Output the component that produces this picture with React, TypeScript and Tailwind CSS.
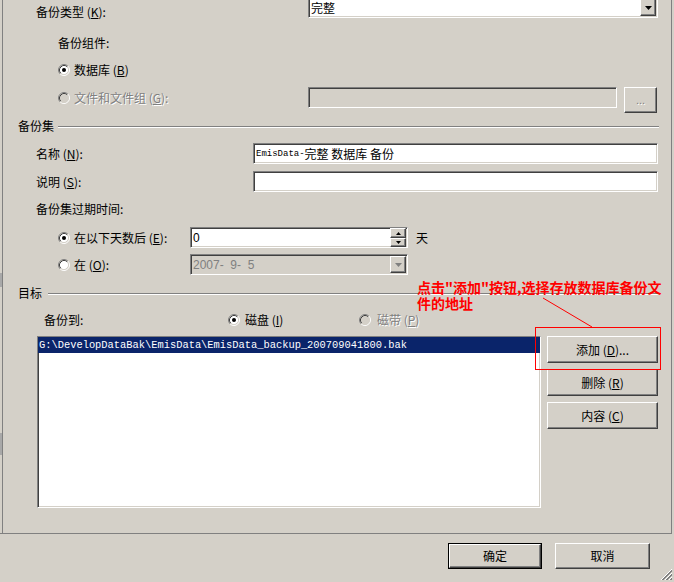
import React from "react";

const SUNKEN =
  "border border-t-[#808080] border-l-[#808080] border-b-white border-r-white shadow-[inset_1px_1px_0_#404040,inset_-1px_-1px_0_#d4d0c8]";
const RAISED =
  "border border-t-white border-l-white border-b-[#404040] border-r-[#404040] shadow-[inset_-1px_-1px_0_#808080] bg-[#d4d0c8]";

function Acc({ c }: { c: string }) {
  return <span className="underline underline-offset-[1px]">{c}</span>;
}

function Radio({ checked, disabled }: { checked?: boolean; disabled?: boolean }) {
  return (
    <svg width="12" height="12" viewBox="0 0 12 12" className="shrink-0">
      <circle cx="6" cy="6" r="4.5" fill={disabled ? "#d4d0c8" : "#ffffff"} />
      <path d="M2.11 9.89 A5.5 5.5 0 0 1 9.89 2.11" stroke="#808080" strokeWidth="1" fill="none" />
      <path d="M9.89 2.11 A5.5 5.5 0 0 1 2.11 9.89" stroke="#ffffff" strokeWidth="1" fill="none" />
      <path d="M2.82 9.18 A4.5 4.5 0 0 1 9.18 2.82" stroke="#404040" strokeWidth="1" fill="none" />
      <path d="M9.18 2.82 A4.5 4.5 0 0 1 2.82 9.18" stroke="#d4d0c8" strokeWidth="1" fill="none" />
      {checked && <circle cx="6" cy="6" r="2" fill="#000000" />}
    </svg>
  );
}

function ArrowBtn({ disabled, h = 17 }: { disabled?: boolean; h?: number }) {
  return (
    <div className={`${RAISED} w-[16px] flex items-center justify-center shrink-0`} style={{ height: h }}>
      <svg width="7" height="4" viewBox="0 0 7 4">
        <path d="M0 0 H7 L3.5 4 Z" fill={disabled ? "#808080" : "#000000"} />
      </svg>
    </div>
  );
}

function SpinBtn({ up, h }: { up?: boolean; h: number }) {
  return (
    <div className={`${RAISED} w-[16px] flex items-center justify-center`} style={{ height: h }}>
      <svg width="5" height="3" viewBox="0 0 5 3">
        {up ? <path d="M0 3 H5 L2.5 0 Z" fill="#000" /> : <path d="M0 0 H5 L2.5 3 Z" fill="#000" />}
      </svg>
    </div>
  );
}

function Header({ text, gap }: { text: string; gap: string }) {
  return (
    <div className={`h-[12px] flex items-start pl-[15px] pr-[12px] ${gap}`}>
      <span className="leading-[12px] whitespace-nowrap">{text}</span>
      <div className="flex-1 mt-[6px] h-[2px] border-t border-t-[#808080] border-b border-b-white" />
    </div>
  );
}

function Button({ children, className = "" }: { children: React.ReactNode; className?: string }) {
  return (
    <div className={`${RAISED} flex items-center justify-center ${className}`}>{children}</div>
  );
}

export default function App() {
  return (
    <div className="relative w-[674px] h-[582px] overflow-hidden bg-[#d4d0c8] text-black text-[12px] leading-[12px] font-['Noto_Sans_CJK_SC','Noto_Sans',sans-serif]">
      <div className="flex h-[534px]">
        <div className="w-[2px] h-[534px] border-b border-[#808080] flex flex-col shrink-0">
          <div className="h-[273px]" />
          <div className="h-[14px] bg-[#a8a8a8]" />
          <div className="h-[146px]" />
          <div className="h-[22px] bg-[#a8a8a8]" />
        </div>
        <div className="w-[670px] h-[534px] border-l border-r border-b border-[#808080] flex flex-col shrink-0">
          {/* backup type */}
          <div className="flex h-[18px] shrink-0">
            <div className="w-[305px] pl-[33px] pt-[6px] whitespace-nowrap">
              备份类型 (<Acc c="K" />):
            </div>
            <div className={`${SUNKEN} bg-white w-[350px] h-[21px] -mt-[3px] flex items-center justify-between pl-[2px] pr-[1px]`}>
              <span>完整</span>
              <ArrowBtn />
            </div>
          </div>

          <div className="mt-[19px] h-[12px] pl-[55px] whitespace-nowrap">备份组件:</div>

          <div className="mt-[14px] h-[14px] flex items-center gap-[4px] pl-[55px] whitespace-nowrap">
            <Radio checked />
            <span>
              数据库 (<Acc c="B" />)
            </span>
          </div>

          <div className="mt-[10px] h-[27px] flex items-start">
            <div className="w-[305px] h-[21px] pl-[55px] flex items-center gap-[4px] text-[#808080] [text-shadow:1px_1px_0_#ffffff] whitespace-nowrap">
              <Radio disabled />
              <span>
                文件和文件组 (<Acc c="G" />):
              </span>
            </div>
            <div className={`${SUNKEN} bg-[#d4d0c8] w-[309px] h-[21px]`} />
            <Button className="ml-[7px] w-[33px] h-[26px] text-[#808080] [text-shadow:1px_1px_0_#ffffff] font-['Liberation_Sans',sans-serif] text-[11px]">
              ...
            </Button>
          </div>

          <div className="mt-[6px]">
            <Header text="备份集" gap="gap-[4px]" />
          </div>

          <div className="mt-[11px] h-[21px] flex items-center">
            <div className="w-[250px] pl-[33px] whitespace-nowrap">
              名称 (<Acc c="N" />):
            </div>
            <div className={`${SUNKEN} bg-white w-[405px] h-[21px] flex items-center pl-[2px] whitespace-nowrap`}>
              <span className="font-['Liberation_Mono',monospace] text-[9px]">EmisData-</span>
              <span>完整 数据库 备份</span>
            </div>
          </div>

          <div className="mt-[7px] h-[21px] flex items-center">
            <div className="w-[250px] pl-[33px] whitespace-nowrap">
              说明 (<Acc c="S" />):
            </div>
            <div className={`${SUNKEN} bg-white w-[405px] h-[21px]`} />
          </div>

          <div className="mt-[11px] h-[12px] pl-[33px] whitespace-nowrap">备份集过期时间:</div>

          <div className="mt-[12px] h-[21px] flex items-center">
            <div className="w-[187px] pl-[55px] flex items-center gap-[4px] whitespace-nowrap">
              <Radio checked />
              <span>
                在以下天数后 (<Acc c="E" />):
              </span>
            </div>
            <div className={`${SUNKEN} bg-white w-[218px] h-[21px] flex items-center justify-between pl-[2px] pr-[1px]`}>
              <span className="font-['Liberation_Sans',sans-serif]">0</span>
              <div className="flex flex-col">
                <SpinBtn up h={10} />
                <SpinBtn h={9} />
              </div>
            </div>
            <span className="ml-[8px]">天</span>
          </div>

          <div className="mt-[6px] h-[21px] flex items-center">
            <div className="w-[187px] pl-[55px] flex items-center gap-[4px] whitespace-nowrap">
              <Radio />
              <span>
                在 (<Acc c="O" />):
              </span>
            </div>
            <div className={`${SUNKEN} bg-[#d4d0c8] w-[218px] h-[21px] flex items-center justify-between pl-[2px] pr-[1px]`}>
              <span className="text-[#808080] font-['Liberation_Sans',sans-serif] text-[12px] whitespace-pre">
                2007-  9-  5
              </span>
              <ArrowBtn disabled />
            </div>
          </div>

          <div className="mt-[12px]">
            <Header text="目标" gap="gap-[6px]" />
          </div>

          <div className="mt-[14px] h-[14px] flex items-center whitespace-nowrap">
            <div className="w-[225px] pl-[41px]">备份到:</div>
            <div className="w-[131px] flex items-center gap-[5px]">
              <Radio checked />
              <span>
                磁盘 (<Acc c="I" />)
              </span>
            </div>
            <div className="flex items-center gap-[6px] text-[#808080] [text-shadow:1px_1px_0_#ffffff]">
              <Radio disabled />
              <span>
                磁带 (<Acc c="P" />)
              </span>
            </div>
          </div>

          <div className="mt-[9px] flex items-start pl-[34px]">
            <div className={`${SUNKEN} bg-white w-[504px] h-[172px]`}>
              <div className="h-[16px] bg-[#0a246a] text-white flex items-center pl-[1px] font-['Liberation_Mono',monospace] text-[10.4px] whitespace-nowrap">
                {"G:\\DevelopDataBak\\EmisData\\EmisData_backup_200709041800.bak"}
              </div>
            </div>
            <div className="ml-[6px] w-[111px] flex flex-col gap-[6px]">
              <Button className="h-[27px] whitespace-nowrap">
                添加 (<Acc c="D" />)...
              </Button>
              <Button className="h-[27px] whitespace-nowrap">
                删除 (<Acc c="R" />)
              </Button>
              <Button className="h-[27px] whitespace-nowrap">
                内容 (<Acc c="C" />)
              </Button>
            </div>
          </div>
        </div>
      </div>

      {/* bottom buttons */}
      <div className="flex justify-end gap-[13px] pt-[9px] pr-[24px]">
        <div className="w-[94px] h-[26px] border border-black flex">
          <Button className="flex-1">确定</Button>
        </div>
        <Button className="w-[95px] h-[26px]">取消</Button>
      </div>

      {/* size grip */}
      <svg className="absolute right-[1px] bottom-[1px]" width="13" height="13" viewBox="0 0 13 13">
        <path d="M12 1 L1 12" stroke="#ffffff" />
        <path d="M12 2 L2 12 M12 3 L3 12" stroke="#808080" />
        <path d="M12 5 L5 12" stroke="#ffffff" />
        <path d="M12 6 L6 12 M12 7 L7 12" stroke="#808080" />
        <path d="M12 9 L9 12" stroke="#ffffff" />
        <path d="M12 10 L10 12 M12 11 L11 12" stroke="#808080" />
      </svg>

      {/* annotation */}
      <div className="absolute left-[417px] top-[279px] text-[#ff0000] font-bold text-[14px] leading-[16px] whitespace-nowrap">
        点击"添加"按钮,选择存放数据库备份文
        <br />
        件的地址
      </div>
      <div className="absolute left-[535px] top-[327px] w-[126px] h-[43px] border border-[#ff0000]" />
      <svg className="absolute left-0 top-0 pointer-events-none" width="674" height="582">
        <line x1="543" y1="298" x2="592" y2="327" stroke="#ff0000" strokeWidth="1" />
      </svg>
    </div>
  );
}
